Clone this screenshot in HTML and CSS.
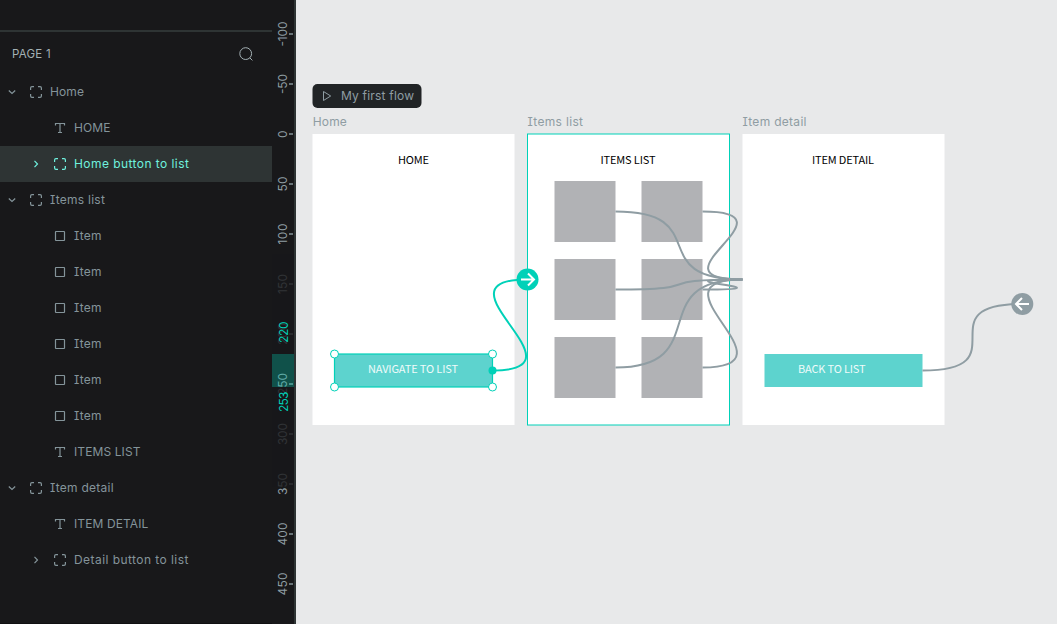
FILE: index.html
```html
<!DOCTYPE html>
<html lang="en">
<head>
<meta charset="utf-8">
<title>Prototype</title>
<link rel="stylesheet" href="styles.css">
</head>
<body>
<svg class="defs" width="0" height="0">
  <symbol id="board" viewBox="0 0 12 12"><path d="M.6 4V2Q.6.6 2 .6H4M8 .6h2Q11.4.6 11.4 2v2M11.4 8v2q0 1.400-1.400 1.400H8M4 11.400H2Q.6 11.400.6 10V8"/></symbol>
  <symbol id="text" viewBox="0 0 12 12"><path d="M1.500 3.500V1.500h9v2M6 1.500v9M4 10.500h4"/></symbol>
  <symbol id="rect" viewBox="0 0 12 12"><rect x="1.500" y="1.500" width="9" height="9" rx=".5"/></symbol>
  <symbol id="down" viewBox="0 0 8 8"><path d="M.8 2.500 4 5.500 7.200 2.500"/></symbol>
  <symbol id="right" viewBox="0 0 8 8"><path d="M2.500.8 5.500 4 2.500 7.200"/></symbol>
</svg>
<div class="app">
  <aside class="sidebar">
    <div class="sitemap"></div>
    <header class="page-head">
      <span>PAGE 1</span>
      <svg class="search" viewBox="0 0 14 14"><circle cx="6.700" cy="6.600" r="5.900"/><path d="m10.900 10.900 2.500 2.500"/></svg>
    </header>
    <ul class="layers">
      <li class="layer"><svg class="chev"><use href="#down"/></svg><svg class="ico"><use href="#board"/></svg><span class="tight">Home</span></li>
      <li class="layer child"><i class="chev"></i><svg class="ico"><use href="#text"/></svg><span class="tight">HOME</span></li>
      <li class="layer child selected"><svg class="chev"><use href="#right"/></svg><svg class="ico"><use href="#board"/></svg><span>Home button to list</span></li>
      <li class="layer"><svg class="chev"><use href="#down"/></svg><svg class="ico"><use href="#board"/></svg><span class="slab">Items list</span></li>
      <li class="layer child"><i class="chev"></i><svg class="ico"><use href="#rect"/></svg><span class="slab">Item</span></li>
      <li class="layer child"><i class="chev"></i><svg class="ico"><use href="#rect"/></svg><span class="slab">Item</span></li>
      <li class="layer child"><i class="chev"></i><svg class="ico"><use href="#rect"/></svg><span class="slab">Item</span></li>
      <li class="layer child"><i class="chev"></i><svg class="ico"><use href="#rect"/></svg><span class="slab">Item</span></li>
      <li class="layer child"><i class="chev"></i><svg class="ico"><use href="#rect"/></svg><span class="slab">Item</span></li>
      <li class="layer child"><i class="chev"></i><svg class="ico"><use href="#rect"/></svg><span class="slab">Item</span></li>
      <li class="layer child"><i class="chev"></i><svg class="ico"><use href="#text"/></svg><span class="tight">ITEMS LIST</span></li>
      <li class="layer"><svg class="chev"><use href="#down"/></svg><svg class="ico"><use href="#board"/></svg><span class="slab">Item detail</span></li>
      <li class="layer child"><i class="chev"></i><svg class="ico"><use href="#text"/></svg><span class="tight">ITEM DETAIL</span></li>
      <li class="layer child"><svg class="chev"><use href="#right"/></svg><svg class="ico"><use href="#board"/></svg><span>Detail button to list</span></li>
    </ul>
  </aside>

  <svg class="ruler" viewBox="272 0 24 624">
    <rect class="rule-edge" x="294" y="0" width="2" height="624"/>
    <path class="ticks" d="M289 34h4M289 84h4M289 134h4M289 184h4M289 234h4M289 284h4M289 334h4M289 384h4M289 434h4M289 484h4M289 534h4M289 584h4"/>
    <g class="marks">
      <text transform="translate(286.500 46.500) rotate(-90)" textLength="25">-100</text>
      <text transform="translate(286.500 94) rotate(-90)" textLength="20">-50</text>
      <text transform="translate(286.500 138) rotate(-90)" textLength="8">0</text>
      <text transform="translate(286.500 191.500) rotate(-90)" textLength="15">50</text>
      <text transform="translate(286.500 244.500) rotate(-90)" textLength="21">100</text>
      <text transform="translate(286.500 294) rotate(-90)" textLength="20">150</text>
      <text transform="translate(286.500 345) rotate(-90)" textLength="22">200</text>
      <text transform="translate(286.500 395) rotate(-90)" textLength="22">250</text>
      <text transform="translate(286.500 445) rotate(-90)" textLength="22">300</text>
      <text transform="translate(286.500 495) rotate(-90)" textLength="22">350</text>
      <text transform="translate(286.500 545.500) rotate(-90)" textLength="23">400</text>
      <text transform="translate(286.500 595.500) rotate(-90)" textLength="23">450</text>
    </g>
    <rect class="veil" x="272" y="254" width="22" height="100"/>
    <rect class="veil" x="272" y="387" width="22" height="100"/>
    <rect class="range" x="272" y="354" width="22" height="33"/>
    <g class="marks active">
      <text transform="translate(287.500 343) rotate(-90)" textLength="21.500">220</text>
      <text transform="translate(287.500 412) rotate(-90)" textLength="20.500">253</text>
    </g>
  </svg>

  <svg class="canvas" viewBox="296 0 761 624">
    <rect class="flow" x="312.500" y="84" width="109" height="24" rx="5"/>
    <path class="play" d="M323.500 91.500v9l7.200-4.500z"/>
    <text class="flow-name" x="341" y="99.500" textLength="73">My first flow</text>

    <g class="board-name">
      <text x="312.800" y="125.500" textLength="34">Home</text>
      <text x="527.500" y="125.500" textLength="55.500">Items list</text>
      <text x="742.500" y="125.500" textLength="64">Item detail</text>
    </g>
    <g class="board">
      <rect x="312.500" y="134" width="202" height="291"/>
      <rect x="527.500" y="134" width="202" height="291"/>
      <rect x="742.500" y="134" width="202" height="291"/>
    </g>
    <g class="board-title">
      <text x="398" y="164" textLength="31">HOME</text>
      <text x="600.500" y="164" textLength="55">ITEMS LIST</text>
      <text x="812" y="164" textLength="62">ITEM DETAIL</text>
    </g>
    <g class="item">
      <rect x="554.500" y="181" width="61" height="61"/><rect x="641.500" y="181" width="61" height="61"/>
      <rect x="554.500" y="259" width="61" height="61"/><rect x="641.500" y="259" width="61" height="61"/>
      <rect x="554.500" y="337" width="61" height="61"/><rect x="641.500" y="337" width="61" height="61"/>
    </g>
    <rect class="button" x="334.500" y="354" width="158" height="33"/>
    <rect class="button" x="764.500" y="354" width="158" height="33"/>
    <text class="button-text" x="368" y="373.300" textLength="90">NAVIGATE TO LIST</text>
    <text class="button-text" x="798" y="373.300" textLength="67.500">BACK TO LIST</text>
    <rect class="hover" x="527.500" y="134" width="202" height="291"/>

    <g class="link">
      <path d="M615.500 211.500C715.500 211.500 642.500 279.500 742.500 279.500"/>
      <path d="M615.500 289.500C715.500 289.500 642.500 279.500 742.500 279.500"/>
      <path d="M615.500 367.500C715.500 367.500 642.500 279.500 742.500 279.500"/>
      <path d="M702.500 211.500C802.500 211.500 642.500 279.500 742.500 279.500"/>
      <path d="M702.500 289.500C802.500 289.500 642.500 279.500 742.500 279.500"/>
      <path d="M702.500 367.500C802.500 367.500 642.500 279.500 742.500 279.500"/>
      <path d="M922.500 370.500C1022.500 370.500 922.500 304 1022.500 304"/>
    </g>
    <circle class="end" cx="1022.300" cy="304" r="11"/>
    <path class="arrow" d="M1029 304h-13M1022 298l-6 6 6 6"/>

    <rect class="selection" x="334.500" y="354" width="158" height="33"/>
    <path class="link-active" d="M492.500 370.500C592.500 370.500 427.500 279.500 527.500 279.500"/>
    <circle class="end-active" cx="527.500" cy="279.500" r="11"/>
    <path class="arrow" d="M521 279.500h13M528 273.500l6 6-6 6"/>
    <g class="handle">
      <circle cx="334.500" cy="354" r="4"/><circle cx="492.500" cy="354" r="4"/>
      <circle cx="334.500" cy="387" r="4"/><circle cx="492.500" cy="387" r="4"/>
    </g>
    <circle class="end-active" cx="492.500" cy="370.500" r="4"/>
  </svg>
</div>
</body>
</html>
```
FILE: styles.css
```css
* { box-sizing: border-box; }
body { margin: 0; overflow: hidden; font-family: Inter, sans-serif; font-size: 12px; }
.defs { position: absolute; }
.app { display: flex; width: 1057px; height: 624px; background: #18181a; }
.app > svg { display: block; flex: none; }

.sidebar { width: 272px; height: 624px; flex: none; border-bottom: 1px solid #101012; color: #8a9a9e; }
.sitemap { height: 32px; border-bottom: 2px solid #2e3434; }
.page-head { display: flex; align-items: center; justify-content: space-between; height: 42px; padding: 2px 19px 0 12px; font-size: 11.5px; letter-spacing: .25px; color: #a4b1b5; }
.search { width: 14px; height: 14px; fill: none; stroke: #a4b1b5; stroke-width: 1; }

.layers { list-style: none; margin: 0; padding: 0; }
.layer { display: flex; align-items: center; height: 36px; padding-left: 8px; line-height: 16px; color: #84949a; letter-spacing: .44px; white-space: nowrap; }
.layer.child { padding-left: 32px; }
.layer.selected { background: #2e3434; color: #6ff1de; }
.chev { width: 8px; height: 8px; margin-right: 14px; fill: none; stroke: currentColor; stroke-width: 1.2; }
.ico { width: 12px; height: 12px; margin-right: 8px; fill: none; stroke: currentColor; stroke-width: 1.2; }
.slab { font-feature-settings: "cv08" 1; letter-spacing: .25px; }
.tight { letter-spacing: .1px; }

.ruler { width: 24px; height: 624px; }
.rule-edge { fill: #2e3434; }
.ticks { stroke: #697478; stroke-width: 2; }
.marks { font-size: 12px; fill: #8f9da3; }
.marks.active { fill: #00d1b8; }
.veil { fill: #18181a; opacity: .8; }
.range { fill: #00d1b8; opacity: .31; }

.canvas { width: 761px; height: 624px; background: #e8e9ea; }
.flow { fill: #212426; }
.play { fill: none; stroke: #8f9da3; stroke-width: 1; }
.flow-name { fill: #8f9da3; }
.board-name { fill: #8f9da3; font-feature-settings: "cv08" 1; }
.board { fill: #fff; }
.board-title { font: 11px "Noto Sans CJK SC", sans-serif; fill: #000; }
.item { fill: #b1b2b5; }
.button { fill: #5dd3ce; }
.button-text { font: 11px "Noto Sans CJK SC", sans-serif; fill: #effbfa; }
.hover { fill: none; stroke: #00d1b8; stroke-width: 1; }
.link { fill: none; stroke: #8f9da3; stroke-width: 2; }
.link-active { fill: none; stroke: #00d1b8; stroke-width: 2; }
.selection { fill: none; stroke: #00d1b8; stroke-width: 1.2; }
.end { fill: #8f9da3; }
.end-active { fill: #00d1b8; }
.arrow { fill: none; stroke: #fff; stroke-width: 2; }
.handle { fill: #fff; stroke: #00d1b8; stroke-width: 1; }
```
